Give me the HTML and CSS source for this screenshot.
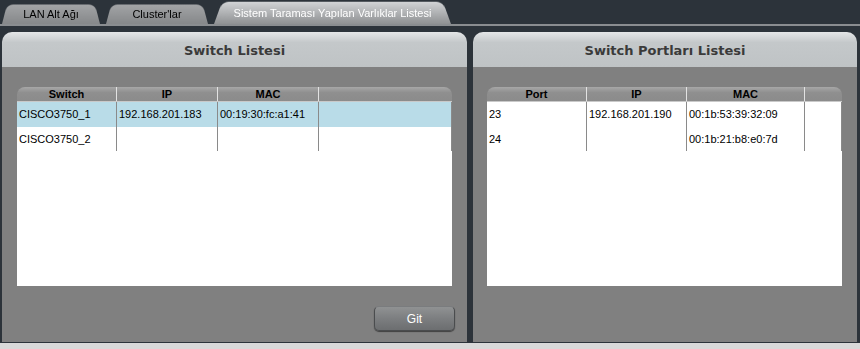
FILE: index.html
```html
<!DOCTYPE html>
<html lang="tr">
<head>
  <meta charset="UTF-8">
  <title>Sistem Taraması Yapılan Varlıklar Listesi</title>
  <link rel="stylesheet" href="styles.css">
</head>
<body>
  <div class="tabs">
    <div class="tab tab-lan">LAN Alt Ağı</div>
    <div class="tab tab-cluster">Cluster'lar</div>
    <div class="tab tab-active">Sistem Taraması Yapılan Varlıklar Listesi</div>
  </div>

  <div class="panels">
    <div class="panel panel-left">
      <div class="panel-title">Switch Listesi</div>
      <div class="panel-body">
        <div class="grid">
          <div class="grid-head cols-switch">
            <div class="th">Switch</div>
            <div class="th">IP</div>
            <div class="th">MAC</div>
            <div class="th"></div>
          </div>
          <div class="grid-rows">
            <div class="row cols-switch selected">
              <div class="td">CISCO3750_1</div>
              <div class="td">192.168.201.183</div>
              <div class="td">00:19:30:fc:a1:41</div>
              <div class="td"></div>
            </div>
            <div class="row cols-switch">
              <div class="td">CISCO3750_2</div>
              <div class="td"></div>
              <div class="td"></div>
              <div class="td"></div>
            </div>
          </div>
        </div>
        <div class="actions">
          <button class="btn" type="button">Git</button>
        </div>
      </div>
    </div>

    <div class="panel panel-right">
      <div class="panel-title">Switch Portları Listesi</div>
      <div class="panel-body">
        <div class="grid">
          <div class="grid-head cols-port">
            <div class="th">Port</div>
            <div class="th">IP</div>
            <div class="th">MAC</div>
            <div class="th"></div>
          </div>
          <div class="grid-rows">
            <div class="row cols-port">
              <div class="td">23</div>
              <div class="td">192.168.201.190</div>
              <div class="td">00:1b:53:39:32:09</div>
              <div class="td"></div>
            </div>
            <div class="row cols-port">
              <div class="td">24</div>
              <div class="td"></div>
              <div class="td">00:1b:21:b8:e0:7d</div>
              <div class="td"></div>
            </div>
          </div>
        </div>
      </div>
    </div>
  </div>

  <div class="footer-strip"></div>
</body>
</html>
```

FILE: styles.css
```css
html, body {
  margin: 0;
  padding: 0;
}

body {
  width: 860px;
  height: 349px;
  overflow: hidden;
  background-color: #2c333a;
  font-family: "Liberation Sans", Arial, sans-serif;
  font-size: 11px;
  color: #000000;
  display: flex;
  flex-direction: column;
}

/* tab bar */
.tabs {
  height: 24px;
  display: flex;
  align-items: flex-end;
  padding-left: 2px;
  gap: 6px;
  border-bottom: 2px solid #8a8d90;
}

.tab {
  position: relative;
  z-index: 0;
  height: 22px;
  line-height: 24px;
  text-align: center;
  color: #000000;
}

.tab::before {
  content: "";
  position: absolute;
  inset: 0;
  z-index: -1;
  background: linear-gradient(#a3a5a7, #86888a);
  border-radius: 7px 7px 0 0;
  transform: perspective(30px) rotateX(9deg);
  transform-origin: bottom;
}

.tab-lan {
  width: 98px;
}

.tab-cluster {
  width: 102px;
}

.tab-active {
  width: 237px;
  height: 24px;
  line-height: 27px;
  color: #ffffff;
}

.tab-active::before {
  background: linear-gradient(#d2d4d6, #8f9193);
  transform: perspective(40px) rotateX(7deg);
}

/* panels */
.panels {
  display: flex;
  gap: 6px;
  padding: 6px 3px 0 2px;
  height: 310px;
}

.panel {
  display: flex;
  flex-direction: column;
}

.panel-left {
  width: 465px;
}

.panel-right {
  width: 384px;
}

.panel-title {
  height: 35px;
  line-height: 37px;
  text-align: center;
  font-family: "DejaVu Sans", Verdana, sans-serif;
  font-weight: bold;
  font-size: 13px;
  color: #3a3a3a;
  background: linear-gradient(#e4e6e7, #c4c8ca 30%, #bfc3c5);
  border-radius: 10px 10px 0 0;
}

.panel-body {
  flex: 1;
  background-color: #808080;
  padding: 20px 15px 0 15px;
  display: flex;
  flex-direction: column;
}

.panel-right .panel-body {
  padding-left: 14px;
}

/* grids */
.grid {
  height: 199px;
  display: flex;
  flex-direction: column;
}

.grid-head {
  height: 14px;
  line-height: 14px;
  background: linear-gradient(#a7a7a7, #8f8f8f 40%, #8b8b8b);
  border-radius: 8px 8px 0 0;
  border-bottom: 1px solid #c9c9c9;
  font-weight: bold;
  text-align: center;
}

.cols-switch {
  display: grid;
  grid-template-columns: 100px 101px 101px 1fr;
}

.cols-port {
  display: grid;
  grid-template-columns: 100px 100px 118px 1fr;
}

.th {
  border-right: 1px solid #e2e2e2;
}

.th:last-child {
  border-right: none;
}

.grid-rows {
  flex: 1;
  background-color: #ffffff;
}

.row {
  height: 25px;
  line-height: 25px;
}

.row.selected {
  background-color: #b9dce8;
}

.td {
  padding-left: 2px;
  border-right: 1px solid #8a8a8a;
  white-space: nowrap;
  overflow: hidden;
}

.row:last-child .td {
  height: 24px;
}

/* button */
.actions {
  display: flex;
  justify-content: flex-end;
  padding-top: 20px;
  margin-right: -3px;
}

.btn {
  width: 81px;
  height: 25px;
  border: 1px solid #4a4c4e;
  border-top-color: #7a7c7e;
  border-radius: 5px;
  background: linear-gradient(#909293, #7c7e80 50%, #6c6e70);
  box-shadow: 0 1px 1px rgba(0, 0, 0, 0.5);
  color: #ffffff;
  font-family: "Liberation Sans", Arial, sans-serif;
  font-size: 12px;
  cursor: pointer;
}

.footer-strip {
  flex: 1;
  margin-top: 1px;
  background-color: #d9d9d9;
}
```
